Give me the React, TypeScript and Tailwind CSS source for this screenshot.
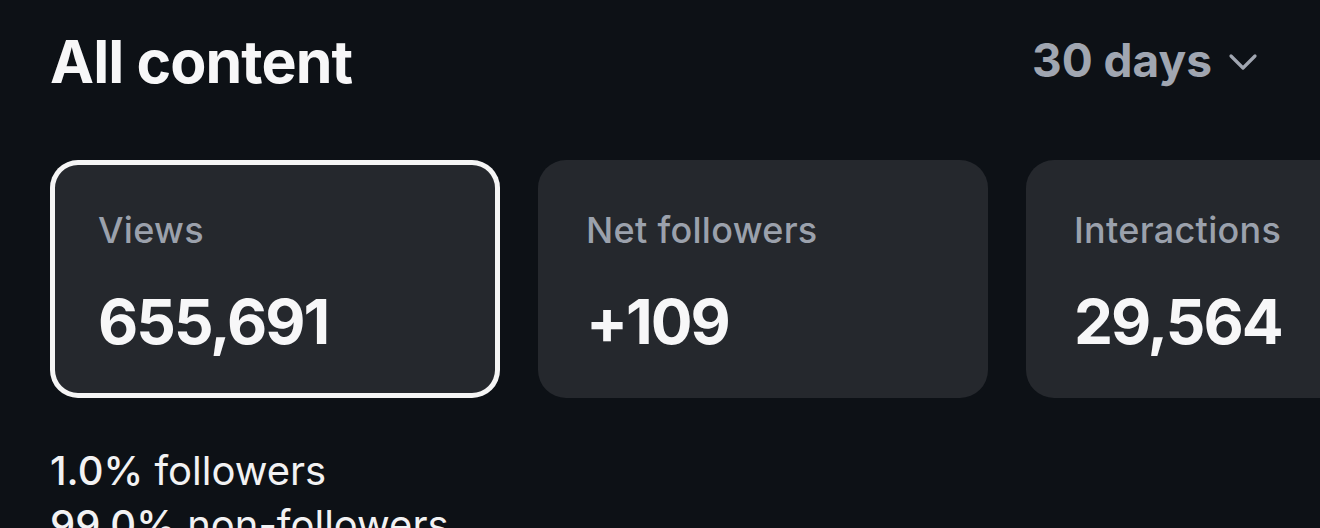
import React from "react";

const font = { fontFamily: "Inter, 'Noto Sans', sans-serif" };

function StatCard({ label, value, active }: { label: string; value: string; active?: boolean }) {
  return (
    <div
      className={`shrink-0 w-[450px] h-[238px] rounded-[28px] bg-[#25282d] pl-[48px] pt-[50px] flex flex-col ${
        active ? "ring-[5px] ring-inset ring-[#f5f5f5]" : ""
      }`}
    >
      <div className="text-[36px] leading-[41px] font-medium text-[#9ba1ac] tracking-[0.3px]">{label}</div>
      <div className="mt-[40px] text-[62px] leading-none font-bold text-[#f7f7f8] tracking-[-2px]">{value}</div>
    </div>
  );
}

export default function App() {
  return (
    <div className="w-[1320px] h-[528px] overflow-hidden bg-[#0d1116]" style={font}>
      <div className="flex items-start justify-between pl-[50px] pr-[62px] pt-[32px]">
        <h1 className="text-[59px] leading-none font-bold text-[#f7f7f8] tracking-[-0.9px]">All content</h1>
        <button className="flex items-center gap-[16px] pt-[5px] text-[46px] leading-none font-bold text-[#a0a6b1]">
          <span>30 days</span>
          <svg width="30" height="20" viewBox="0 0 30 20" fill="none" className="mt-[4px]">
            <path d="M3 4 L15 16 L27 4" stroke="#a0a6b1" strokeWidth="3.2" strokeLinecap="round" strokeLinejoin="round" />
          </svg>
        </button>
      </div>

      <div className="flex gap-[38px] pl-[50px] mt-[69px]">
        <StatCard label="Views" value="655,691" active />
        <StatCard label="Net followers" value="+109" />
        <StatCard label="Interactions" value="29,564" />
      </div>

      <div className="pl-[50px] mt-[46px] text-[40px] leading-[54px] text-[#f2f2f3]">
        <div>
          <span className="font-medium">1.0%</span> followers
        </div>
        <div>
          <span className="font-medium">99.0%</span> non-followers
        </div>
      </div>
    </div>
  );
}
